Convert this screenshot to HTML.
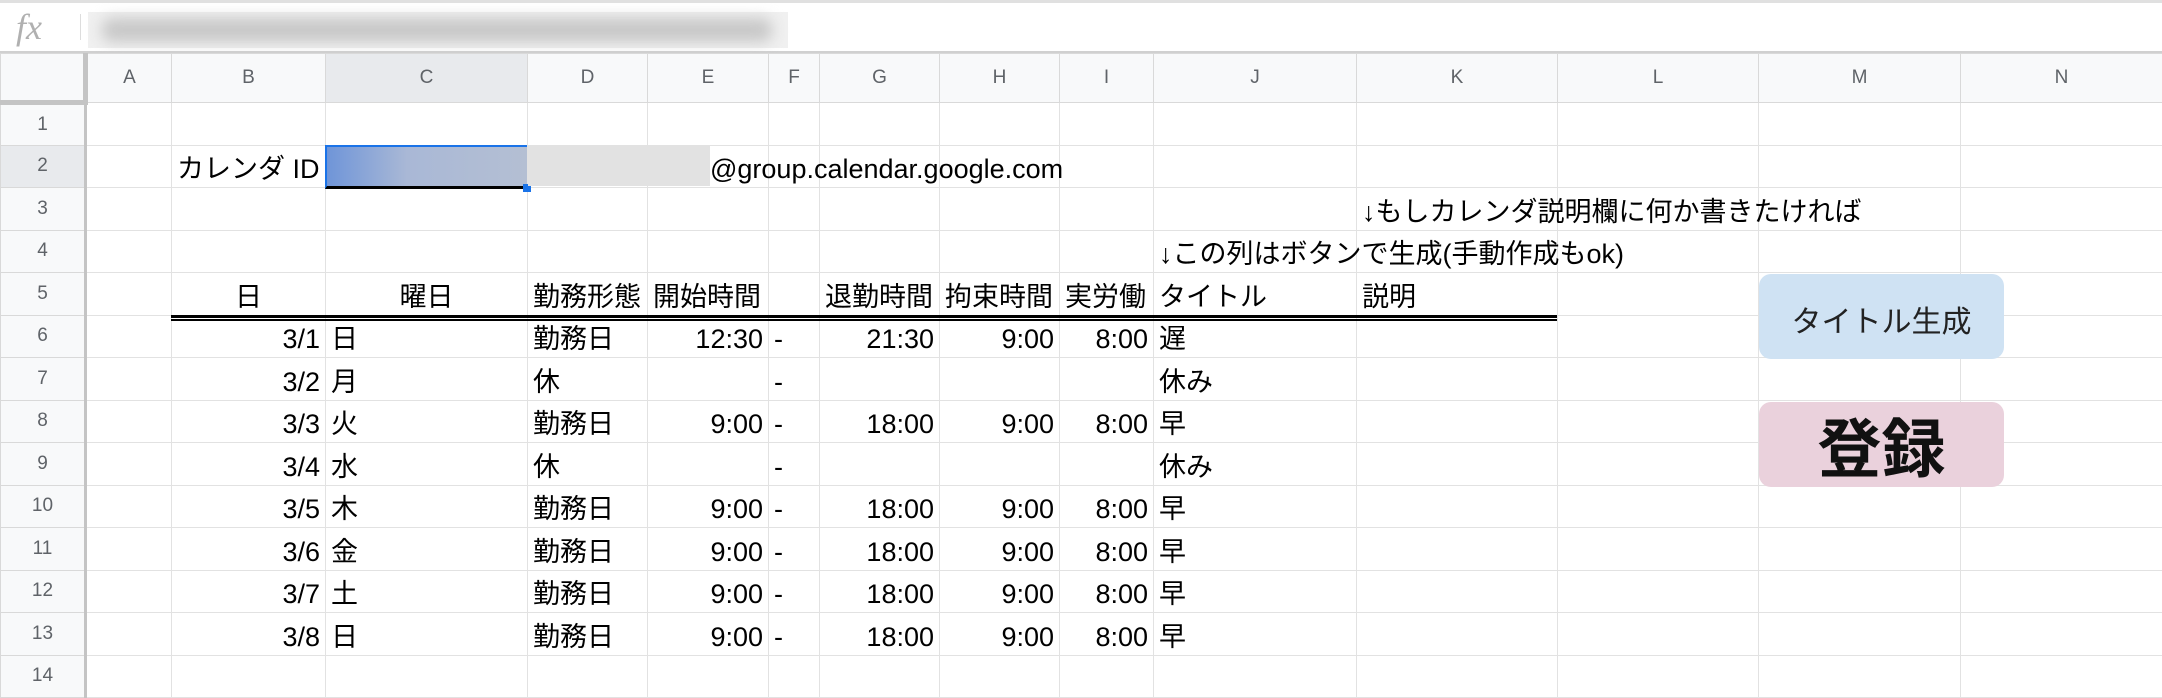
<!DOCTYPE html>
<html><head><meta charset="utf-8">
<style>
*{margin:0;padding:0;box-sizing:border-box}
body{width:2162px;height:660px;overflow:hidden;background:#fff;font-family:"Liberation Sans","Noto Sans CJK JP",sans-serif;position:relative}
.fbar{position:absolute;left:0;top:0;width:2162px;height:53px;background:#fff;border-top:3px solid #e0e0e0;border-bottom:2px solid #d0d0d0}
.fx{position:absolute;left:16px;top:3px;font-family:"Liberation Serif",serif;font-style:italic;font-size:36px;color:#b0b0b0}
.fsep{position:absolute;left:80px;top:11px;width:1px;height:26px;background:#ddd}
.blur{position:absolute;left:88px;top:9px;width:700px;height:36px;background:#f0f0f0}
.blur i{position:absolute;left:14px;top:6px;width:670px;height:24px;background:#c8c8c8;filter:blur(7px);border-radius:10px}
table{position:absolute;left:0;top:53px;border-collapse:collapse;table-layout:fixed;width:2162px}
td{border:1px solid #e2e2e2;height:42.5px;font-size:27px;color:#000;white-space:nowrap;overflow:visible;padding:0 5px 3px;vertical-align:bottom;line-height:30px}
tr.h td{height:49px;background:#f8f9fa;color:#5f6368;text-align:center;vertical-align:middle;font-size:19px;border-color:#d9d9d9;padding:0}
td.rh{background:#f8f9fa;color:#5f6368;text-align:center;vertical-align:middle;font-size:19px;padding:0;border-color:#d9d9d9;border-right:3px solid #c4c4c4}
tr.h td.corner{border-right:5px solid #c4c4c4;border-bottom:5px solid #c4c4c4}
tr.h td.sel,td.rh.sel{background:#e8eaed}
.r{text-align:right}.c{text-align:center}
.dbl{position:absolute;left:171px;top:315px;width:1386px;height:6px;border-top:3px solid #000;border-bottom:2px solid #000}
.btn{position:absolute;border-radius:12px;display:flex;align-items:center;justify-content:center;color:#222;font-family:"Liberation Sans","Noto Sans CJK JP",sans-serif}
</style></head><body>
<div class="fbar"><div class="fx">fx</div><div class="fsep"></div><div class="blur"><i></i></div></div>
<table>
<colgroup><col style="width:85px"><col style="width:86px"><col style="width:154px"><col style="width:202px"><col style="width:120px"><col style="width:121px"><col style="width:51px"><col style="width:120px"><col style="width:120px"><col style="width:94px"><col style="width:203px"><col style="width:201px"><col style="width:201px"><col style="width:202px"><col style="width:202px"></colgroup>
<tr class="h"><td class="corner"></td><td>A</td><td>B</td><td class="sel">C</td><td>D</td><td>E</td><td>F</td><td>G</td><td>H</td><td>I</td><td>J</td><td>K</td><td>L</td><td>M</td><td>N</td></tr>
<tr><td class="rh">1</td><td></td><td></td><td></td><td></td><td></td><td></td><td></td><td></td><td></td><td></td><td></td><td></td><td></td><td></td></tr>
<tr><td class="rh sel">2</td><td></td><td>カレンダ ID</td><td style="position:relative;padding:0"><div style="position:absolute;left:-1px;top:-1px;width:202px;height:44px;border-top:2px solid #1a73e8;border-left:2px solid #1a73e8;border-bottom:3px solid #000;background:linear-gradient(90deg,#6f95d8,#a9b8d6 40%,#b4bfd3)"></div><div style="position:absolute;left:197px;top:38px;width:8px;height:8px;background:#1a73e8"></div><div style="position:absolute;left:202px;top:0;width:182px;height:40px;background:#e2e2e2"></div></td><td></td><td></td><td></td><td style="position:relative"><span style="position:absolute;left:-110px;bottom:3px">@group.calendar.google.com</span></td><td></td><td></td><td></td><td></td><td></td><td></td><td></td></tr>
<tr><td class="rh">3</td><td></td><td></td><td></td><td></td><td></td><td></td><td></td><td></td><td></td><td></td><td>↓もしカレンダ説明欄に何か書きたければ</td><td></td><td></td><td></td></tr>
<tr><td class="rh">4</td><td></td><td></td><td></td><td></td><td></td><td></td><td></td><td></td><td></td><td>↓この列はボタンで生成(手動作成もok)</td><td></td><td></td><td></td><td></td></tr>
<tr><td class="rh">5</td><td></td><td class="c">日</td><td class="c">曜日</td><td>勤務形態</td><td>開始時間</td><td></td><td>退勤時間</td><td>拘束時間</td><td>実労働</td><td>タイトル</td><td>説明</td><td></td><td></td><td></td></tr>
<tr><td class="rh">6</td><td></td><td class="r">3/1</td><td>日</td><td>勤務日</td><td class="r">12:30</td><td>-</td><td class="r">21:30</td><td class="r">9:00</td><td class="r">8:00</td><td>遅</td><td></td><td></td><td></td><td></td></tr>
<tr><td class="rh">7</td><td></td><td class="r">3/2</td><td>月</td><td>休</td><td class="r"></td><td>-</td><td></td><td></td><td></td><td>休み</td><td></td><td></td><td></td><td></td></tr>
<tr><td class="rh">8</td><td></td><td class="r">3/3</td><td>火</td><td>勤務日</td><td class="r">9:00</td><td>-</td><td class="r">18:00</td><td class="r">9:00</td><td class="r">8:00</td><td>早</td><td></td><td></td><td></td><td></td></tr>
<tr><td class="rh">9</td><td></td><td class="r">3/4</td><td>水</td><td>休</td><td></td><td>-</td><td></td><td></td><td></td><td>休み</td><td></td><td></td><td></td><td></td></tr>
<tr><td class="rh">10</td><td></td><td class="r">3/5</td><td>木</td><td>勤務日</td><td class="r">9:00</td><td>-</td><td class="r">18:00</td><td class="r">9:00</td><td class="r">8:00</td><td>早</td><td></td><td></td><td></td><td></td></tr>
<tr><td class="rh">11</td><td></td><td class="r">3/6</td><td>金</td><td>勤務日</td><td class="r">9:00</td><td>-</td><td class="r">18:00</td><td class="r">9:00</td><td class="r">8:00</td><td>早</td><td></td><td></td><td></td><td></td></tr>
<tr><td class="rh">12</td><td></td><td class="r">3/7</td><td>土</td><td>勤務日</td><td class="r">9:00</td><td>-</td><td class="r">18:00</td><td class="r">9:00</td><td class="r">8:00</td><td>早</td><td></td><td></td><td></td><td></td></tr>
<tr><td class="rh">13</td><td></td><td class="r">3/8</td><td>日</td><td>勤務日</td><td class="r">9:00</td><td>-</td><td class="r">18:00</td><td class="r">9:00</td><td class="r">8:00</td><td>早</td><td></td><td></td><td></td><td></td></tr>
<tr><td class="rh">14</td><td></td><td></td><td></td><td></td><td></td><td></td><td></td><td></td><td></td><td></td><td></td><td></td><td></td><td></td></tr>
</table>
<div class="dbl"></div>
<div class="btn" style="left:1759px;top:274px;width:245px;height:85px;background:#cfe2f3;font-size:30px;color:#222;padding-top:4px">タイトル生成</div>
<div class="btn" style="left:1759px;top:402px;width:245px;height:85px;background:#ead1dc;font-size:64px;font-weight:bold;color:#111">登録</div>
</body></html>
